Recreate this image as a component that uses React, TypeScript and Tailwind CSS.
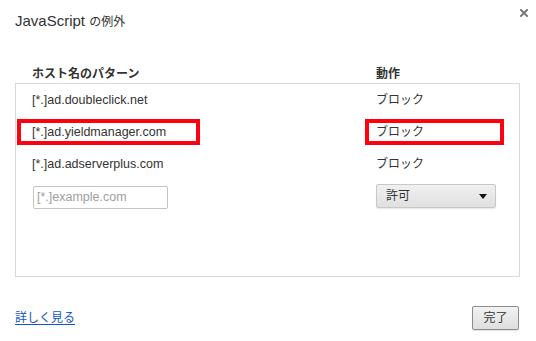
const FONT = "font-['Liberation_Sans','Noto_Sans_CJK_JP',sans-serif]";

const RULES = [
  { pattern: "[*.]ad.doubleclick.net", action: "ブロック" },
  { pattern: "[*.]ad.yieldmanager.com", action: "ブロック" },
  { pattern: "[*.]ad.adserverplus.com", action: "ブロック" },
];

function CloseIcon() {
  return (
    <svg width="8" height="8" viewBox="0 0 8 8" className="absolute left-[520px] top-[9px]">
      <path d="M1 1 L7 7 M7 1 L1 7" stroke="#7a7a7a" strokeWidth="2" strokeLinecap="square" />
    </svg>
  );
}

export default function App() {
  return (
    <div className={`relative w-[536px] h-[341px] bg-white text-[#333] ${FONT}`}>
      <div className="pl-[15px] pt-[12px] h-[30px] leading-[18px]">
        <span className="text-[15px]">JavaScript </span>
        <span className="text-[12px]">の例外</span>
      </div>
      <CloseIcon />

      <div className="mt-[36px] h-[16px] flex items-center pl-[32px] text-[12px] font-bold leading-[16px]">
        <div className="w-[344px]">ホスト名のパターン</div>
        <div>動作</div>
      </div>

      <div className="mt-[1px] ml-[15px] w-[505px] h-[194px] border border-[#d9d9d9] pl-[16px]">
        {RULES.map((rule) => (
          <div key={rule.pattern} className="h-[32px] flex items-center">
            <div className="w-[344px] text-[12.5px]">{rule.pattern}</div>
            <div className="text-[12px]">{rule.action}</div>
          </div>
        ))}
        <div className="pt-[4px] flex items-start">
          <div className="w-[344px]">
            <input
              placeholder="[*.]example.com"
              className="ml-[1px] mt-[1px] w-[135px] h-[23px] border border-[#c3c3c3] rounded-[2px] px-[3px] text-[12.5px] placeholder:text-[#a0a0a0] outline-none"
            />
          </div>
          <div className="w-[120px] h-[24px] flex items-center justify-between pl-[9px] pr-[8px] border border-[#c8c8c8] rounded-[2px] bg-gradient-to-b from-[#f0f0f0] to-[#e0e0e0] shadow-[0_1px_1px_rgba(0,0,0,0.1)] text-[12px]">
            <span>許可</span>
            <svg width="8" height="5" viewBox="0 0 8 5">
              <path d="M0 0 H8 L4 5 Z" fill="#111" />
            </svg>
          </div>
        </div>
      </div>

      <div className="mt-[29px] flex items-center justify-between pl-[15px] pr-[17px]">
        <a href="#" className="text-[12px] text-[#1155cc] underline underline-offset-[2px]">
          詳しく見る
        </a>
        <button className="w-[47px] h-[24px] border border-[#8c8c8c] rounded-[2px] bg-gradient-to-b from-[#f2f2f2] to-[#dedede] shadow-[0_1px_1px_rgba(0,0,0,0.12)] text-[12px] text-[#333]">
          完了
        </button>
      </div>

      {/* red highlight frames drawn over the second row */}
      <div className="absolute left-[17px] top-[119px] w-[183px] h-[26px] border-4 border-[#ff0010]" />
      <div className="absolute left-[365px] top-[119px] w-[139px] h-[26px] border-4 border-[#ff0010]" />
    </div>
  );
}
